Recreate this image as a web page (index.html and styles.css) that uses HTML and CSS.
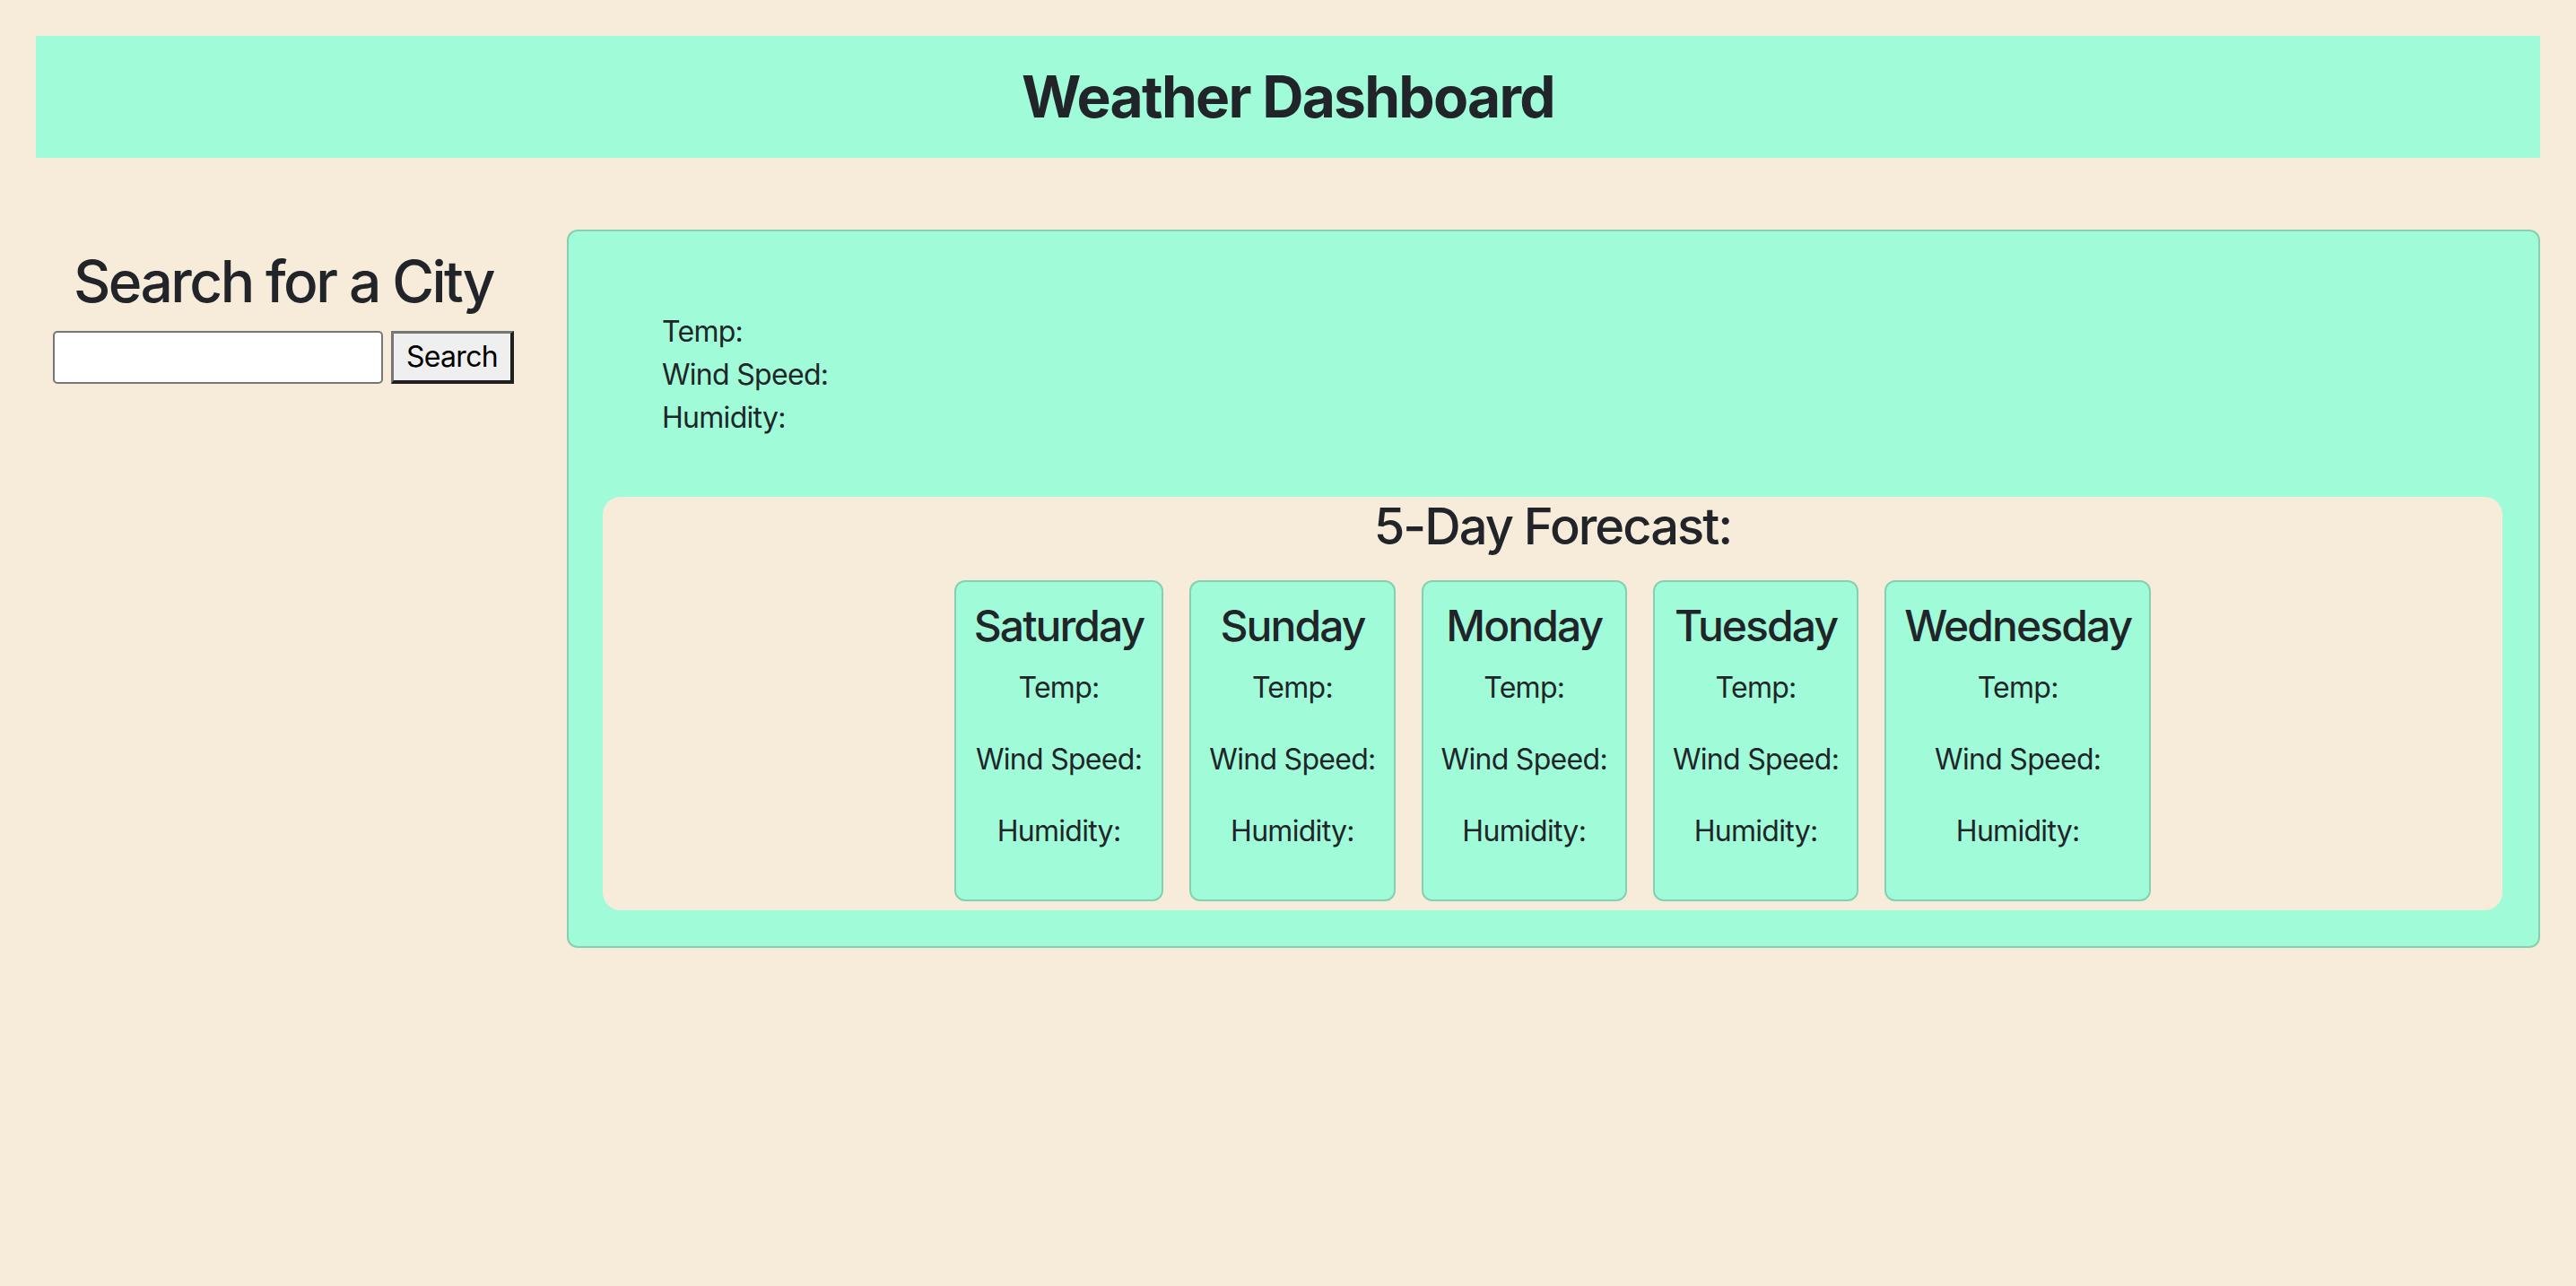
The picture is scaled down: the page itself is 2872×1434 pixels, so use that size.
FILE: index.html
```html
<!DOCTYPE html>
<html lang="en">
<head>
<meta charset="utf-8">
<title>Weather Dashboard</title>
<link rel="stylesheet" href="styles.css">
</head>
<body>
  <header class="top-bar">
    <h1 class="title">Weather Dashboard</h1>
  </header>
  <main class="layout">
    <section class="search">
      <h2 class="search-title">Search for a City</h2>
      <form class="search-row">
        <input class="search-input" type="text">
        <button class="search-btn" type="button">Search</button>
      </form>
    </section>
    <section class="current">
      <ul class="current-list">
        <li>Temp:</li>
        <li>Wind Speed:</li>
        <li>Humidity:</li>
      </ul>
      <div class="forecast">
        <h3 class="forecast-title">5-Day Forecast:</h3>
        <div class="cards">
          <div class="card"><h4 class="day">Saturday</h4><p>Temp:</p><p>Wind Speed:</p><p>Humidity:</p></div>
          <div class="card"><h4 class="day">Sunday</h4><p>Temp:</p><p>Wind Speed:</p><p>Humidity:</p></div>
          <div class="card"><h4 class="day">Monday</h4><p>Temp:</p><p>Wind Speed:</p><p>Humidity:</p></div>
          <div class="card"><h4 class="day">Tuesday</h4><p>Temp:</p><p>Wind Speed:</p><p>Humidity:</p></div>
          <div class="card"><h4 class="day">Wednesday</h4><p>Temp:</p><p>Wind Speed:</p><p>Humidity:</p></div>
        </div>
      </div>
    </section>
  </main>
</body>
</html>
```
FILE: styles.css
```css
html, body {
  margin: 0;
}
body {
  padding: 40px;
  background: #f7ebda;
  font-family: Inter, "Noto Sans", sans-serif;
  font-size: 32px;
  line-height: 1.5;
  letter-spacing: -0.022em;
  color: #212529;
}
.top-bar {
  height: 136px;
  background: #a0fcd8;
  display: flex;
  align-items: center;
  justify-content: center;
}
.title {
  margin: 0;
  font-size: 64px;
  font-weight: 700;
  line-height: 1.2;
  letter-spacing: -0.027em;
}
.layout {
  display: grid;
  grid-template-columns: 552px 1fr;
  column-gap: 40px;
  margin-top: 80px;
  align-items: start;
}
.search {
  text-align: center;
  padding-top: 20px;
}
.search-title {
  margin: 0 0 16px;
  font-size: 64px;
  font-weight: 500;
  line-height: 1.2;
  letter-spacing: -0.04em;
}
.search-row {
  display: flex;
  justify-content: center;
  gap: 9px;
  margin: 0;
}
.search-input {
  box-sizing: border-box;
  width: 368px;
  height: 59px;
  border: 2px solid #767676;
  border-radius: 5px;
  background: #fff;
  font: inherit;
  padding: 0 6px;
}
.search-btn {
  box-sizing: border-box;
  height: 59px;
  padding: 0 14px;
  background: #efefef;
  color: #000;
  font-family: Inter, "Noto Sans", sans-serif;
  font-size: 32px;
  line-height: 1;
  letter-spacing: -0.022em;
  border-style: solid;
  border-width: 3px 4px 4px 3px;
  border-color: #767676 #1f1f1f #1f1f1f #767676;
}
.current {
  background: #a0fcd8;
  border: 2px solid #86d0b2;
  border-radius: 12px;
  padding: 88px 40px 40px 38px;
}
.current-list {
  list-style: none;
  margin: 0 0 64px;
  padding: 0 0 0 66px;
}
.forecast {
  background: #f7ebda;
  border-radius: 20px;
  text-align: center;
}
.forecast-title {
  margin: 0 0 16px;
  font-size: 56px;
  font-weight: 500;
  line-height: 1.2;
  letter-spacing: -0.035em;
}
.cards {
  display: flex;
  justify-content: center;
  gap: 29px;
}
.card {
  margin: 10px 0;
  padding: 20px 20px;
  background: #a0fcd8;
  border: 2px solid #86d0b2;
  border-radius: 12px;
}
.day {
  margin: 0 0 16px;
  font-size: 48px;
  font-weight: 500;
  line-height: 1.2;
  letter-spacing: -0.04em;
}
.card p {
  margin: 0 0 32px;
}
```
